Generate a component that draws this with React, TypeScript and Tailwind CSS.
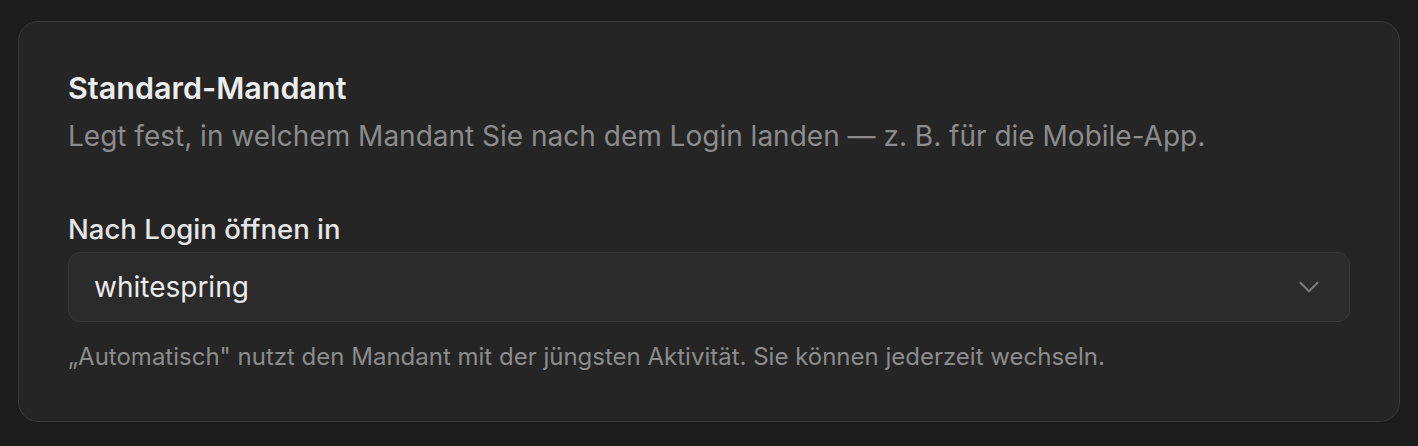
import React, { FC } from "react";
import { ChevronDown } from "lucide-react";

const DefaultTenant: FC = () => {
  return (
    <div className="rounded-[20px] border border-[#3a3a3a] bg-[#252525] px-[49px] pt-[48px] pb-[49px]">
      <h2 className="text-[30.5px] leading-[36px] font-semibold text-[#ececec]">
        Standard-Mandant
      </h2>
      <p className="mt-[13px] text-[28px] leading-[34px] text-[#8c8c8c]">
        Legt fest, in welchem Mandant Sie nach dem Login landen — z. B. für die Mobile-App.
      </p>

      <label className="mt-[59px] block text-[27.5px] leading-[34px] font-medium text-[#e6e6e6]">
        Nach Login öffnen in
      </label>
      <div className="mt-[6px] flex h-[70px] items-center justify-between rounded-[12px] border border-[#383838] bg-[#2b2b2b] pl-[25px] pr-[23px]">
        <span className="text-[28px] text-[#ececec]">whitespring</span>
        <ChevronDown className="h-[34px] w-[34px] text-[#7a7a7a]" strokeWidth={1.5} />
      </div>
      <p className="mt-[20px] text-[24px] leading-[30px] text-[#8c8c8c]">
        „Automatisch" nutzt den Mandant mit der jüngsten Aktivität. Sie können jederzeit wechseln.
      </p>
    </div>
  );
};

export default function App() {
  return (
    <div
      className="min-h-[446px] bg-[#1c1c1c] pl-[18px] pr-[18px] pt-[21px] pb-[26px]"
      style={{ fontFamily: "Inter, 'Noto Sans', sans-serif" }}
    >
      <DefaultTenant />
    </div>
  );
}
